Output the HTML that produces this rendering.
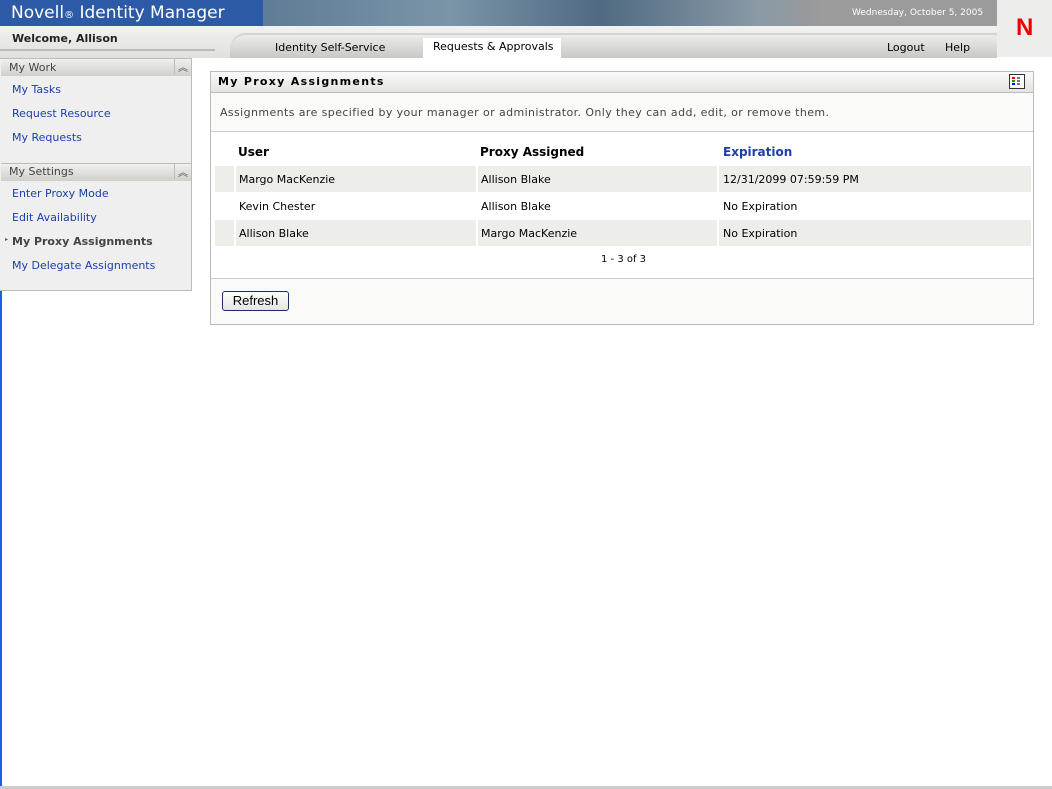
<!DOCTYPE html>
<html><head><meta charset="utf-8"><style>
*{margin:0;padding:0;box-sizing:border-box}
body{width:1052px;height:789px;position:relative;background:#fff;font-family:"DejaVu Sans","Liberation Sans",sans-serif;font-size:12px;overflow:hidden}
.a{position:absolute}
.lk{color:#1a3fa8}
</style></head><body>
<div class="a" style="left:0;top:0;width:1052px;height:26px;background:linear-gradient(90deg,#2c5aa6 0,#2c5aa6 263px,#5f7c96 263px,#7a95a8 450px,#4f6a82 600px,#8a9aa6 760px,#9a9a9a 820px)"></div>
<div class="a" style="left:11px;top:3px;color:#fff;font-size:17px;font-family:'DejaVu Sans',sans-serif">Novell<span style="font-size:10px">®</span> Identity Manager</div>
<div class="a" style="left:820px;top:0;width:177px;height:26px;background:#9b9b9b"></div>
<div class="a" style="left:852px;top:8px;color:#fff;font-size:9px">Wednesday, October 5, 2005</div>
<div class="a" style="left:997px;top:0;width:55px;height:57px;background:#ededeb"></div>
<div class="a" style="left:1016px;top:14px;color:#e00;font-size:24px;font-weight:bold;font-family:'Liberation Sans',sans-serif">N</div>
<div class="a" style="left:0;top:26px;width:997px;height:32px;background:linear-gradient(#f2f2f0,#e0e0dc)"></div>
<div class="a" style="left:12px;top:32px;font-size:11px;font-weight:bold;color:#222">Welcome, Allison</div>
<div class="a" style="left:0;top:49px;width:215px;height:2px;background:#bbb"></div>
<div class="a" style="left:230px;top:33px;width:767px;height:25px;background:linear-gradient(#ececea,#c8c8c4);border-top-left-radius:16px;border-top:2px solid #d4d4d0"></div>
<div class="a" style="left:275px;top:41px;font-size:11px">Identity Self-Service</div>
<div class="a" style="left:423px;top:38px;width:138px;height:20px;background:#fff"></div>
<div class="a" style="left:433px;top:40px;font-size:11px">Requests &amp; Approvals</div>
<div class="a" style="left:887px;top:41px;font-size:11px">Logout</div>
<div class="a" style="left:945px;top:41px;font-size:11px">Help</div>
<div class="a" style="left:0;top:58px;width:2px;height:731px;background:#1b5ee0"></div>
<div class="a" style="left:0;top:58px;width:192px;height:233px;background:#efefef;border:1px solid #bbb;border-left:none"></div>
<div class="a" style="left:1px;top:59px;width:190px;height:17px;background:linear-gradient(#f0f0ee,#cfcfcb)"></div>
<div class="a" style="left:9px;top:61px;font-size:11px;color:#444">My Work</div>
<div class="a" style="left:174px;top:59px;font-size:10px;color:#555;border-left:1px solid #bbb;padding-left:3px">︽</div>
<div class="a lk" style="left:12px;top:83px;font-size:11px">My Tasks</div>
<div class="a lk" style="left:12px;top:107px;font-size:11px">Request Resource</div>
<div class="a lk" style="left:12px;top:131px;font-size:11px">My Requests</div>
<div class="a" style="left:1px;top:163px;width:190px;height:18px;background:linear-gradient(#f0f0ee,#cfcfcb);border-top:1px solid #bbb"></div>
<div class="a" style="left:9px;top:165px;font-size:11px;color:#444">My Settings</div>
<div class="a" style="left:174px;top:164px;font-size:10px;color:#555;border-left:1px solid #bbb;padding-left:3px">︽</div>
<div class="a lk" style="left:12px;top:187px;font-size:11px">Enter Proxy Mode</div>
<div class="a lk" style="left:12px;top:211px;font-size:11px">Edit Availability</div>
<div class="a" style="left:5px;top:236px;font-size:6px;color:#555">▸</div>
<div class="a" style="left:12px;top:235px;font-size:11px;font-weight:bold;color:#444">My Proxy Assignments</div>
<div class="a lk" style="left:12px;top:259px;font-size:11px">My Delegate Assignments</div>
<div class="a" style="left:210px;top:71px;width:824px;height:254px;border:1px solid #bbb;background:#fafaf8"></div>
<div class="a" style="left:211px;top:72px;width:822px;height:21px;background:linear-gradient(#fafaf8,#e4e4e0);border-bottom:1px solid #bbb"></div>
<div class="a" style="left:218px;top:75px;font-size:11px;font-weight:bold;letter-spacing:1.3px">My Proxy Assignments</div>
<div class="a" style="left:1009px;top:74px;width:16px;height:15px;border:1px solid #333;background:#fff"></div>
<div class="a" style="left:1012px;top:77px;width:3px;height:2px;background:#e00"></div>
<div class="a" style="left:1012px;top:80px;width:3px;height:2px;background:#0a0"></div>
<div class="a" style="left:1012px;top:83px;width:3px;height:2px;background:#00e"></div>
<div class="a" style="left:1017px;top:77px;width:3px;height:8px;background:repeating-linear-gradient(#777 0 2px,#fff 2px 3px)"></div>
<div class="a" style="left:220px;top:106px;font-size:11px;color:#444;letter-spacing:0.4px">Assignments are specified by your manager or administrator. Only they can add, edit, or remove them.</div>
<div class="a" style="left:211px;top:131px;width:822px;height:148px;background:#fff;border-top:1px solid #ccc;border-bottom:1px solid #ccc"></div>
<div class="a" style="left:238px;top:145px;font-weight:bold">User</div>
<div class="a" style="left:480px;top:145px;font-weight:bold">Proxy Assigned</div>
<div class="a" style="left:723px;top:145px;font-weight:bold;color:#1a3fa8">Expiration</div>
<div class="a" style="left:215px;top:166px;width:816px;height:26px;background:#ededea"></div>
<div class="a" style="left:215px;top:220px;width:816px;height:26px;background:#ededea"></div>
<div class="a" style="left:234px;top:166px;width:2px;height:80px;background:#fff"></div>
<div class="a" style="left:476px;top:166px;width:2px;height:80px;background:#fff"></div>
<div class="a" style="left:717px;top:166px;width:2px;height:80px;background:#fff"></div>
<div class="a" style="left:239px;top:173px;font-size:11px">Margo MacKenzie</div>
<div class="a" style="left:481px;top:173px;font-size:11px">Allison Blake</div>
<div class="a" style="left:723px;top:173px;font-size:11px">12/31/2099 07:59:59 PM</div>
<div class="a" style="left:239px;top:200px;font-size:11px">Kevin Chester</div>
<div class="a" style="left:481px;top:200px;font-size:11px">Allison Blake</div>
<div class="a" style="left:723px;top:200px;font-size:11px">No Expiration</div>
<div class="a" style="left:239px;top:227px;font-size:11px">Allison Blake</div>
<div class="a" style="left:481px;top:227px;font-size:11px">Margo MacKenzie</div>
<div class="a" style="left:723px;top:227px;font-size:11px">No Expiration</div>
<div class="a" style="left:601px;top:254px;font-size:10px">1 - 3 of 3</div>
<div class="a" style="left:222px;top:291px;width:67px;height:20px;border:1px solid #1a2f6a;border-radius:3px;background:linear-gradient(#fff,#e4e4e0);font-family:'Liberation Sans',sans-serif;font-size:13px;text-align:center;line-height:18px">Refresh</div>
<div class="a" style="left:0;top:786px;width:1052px;height:3px;background:#ccc"></div>
</body></html>
